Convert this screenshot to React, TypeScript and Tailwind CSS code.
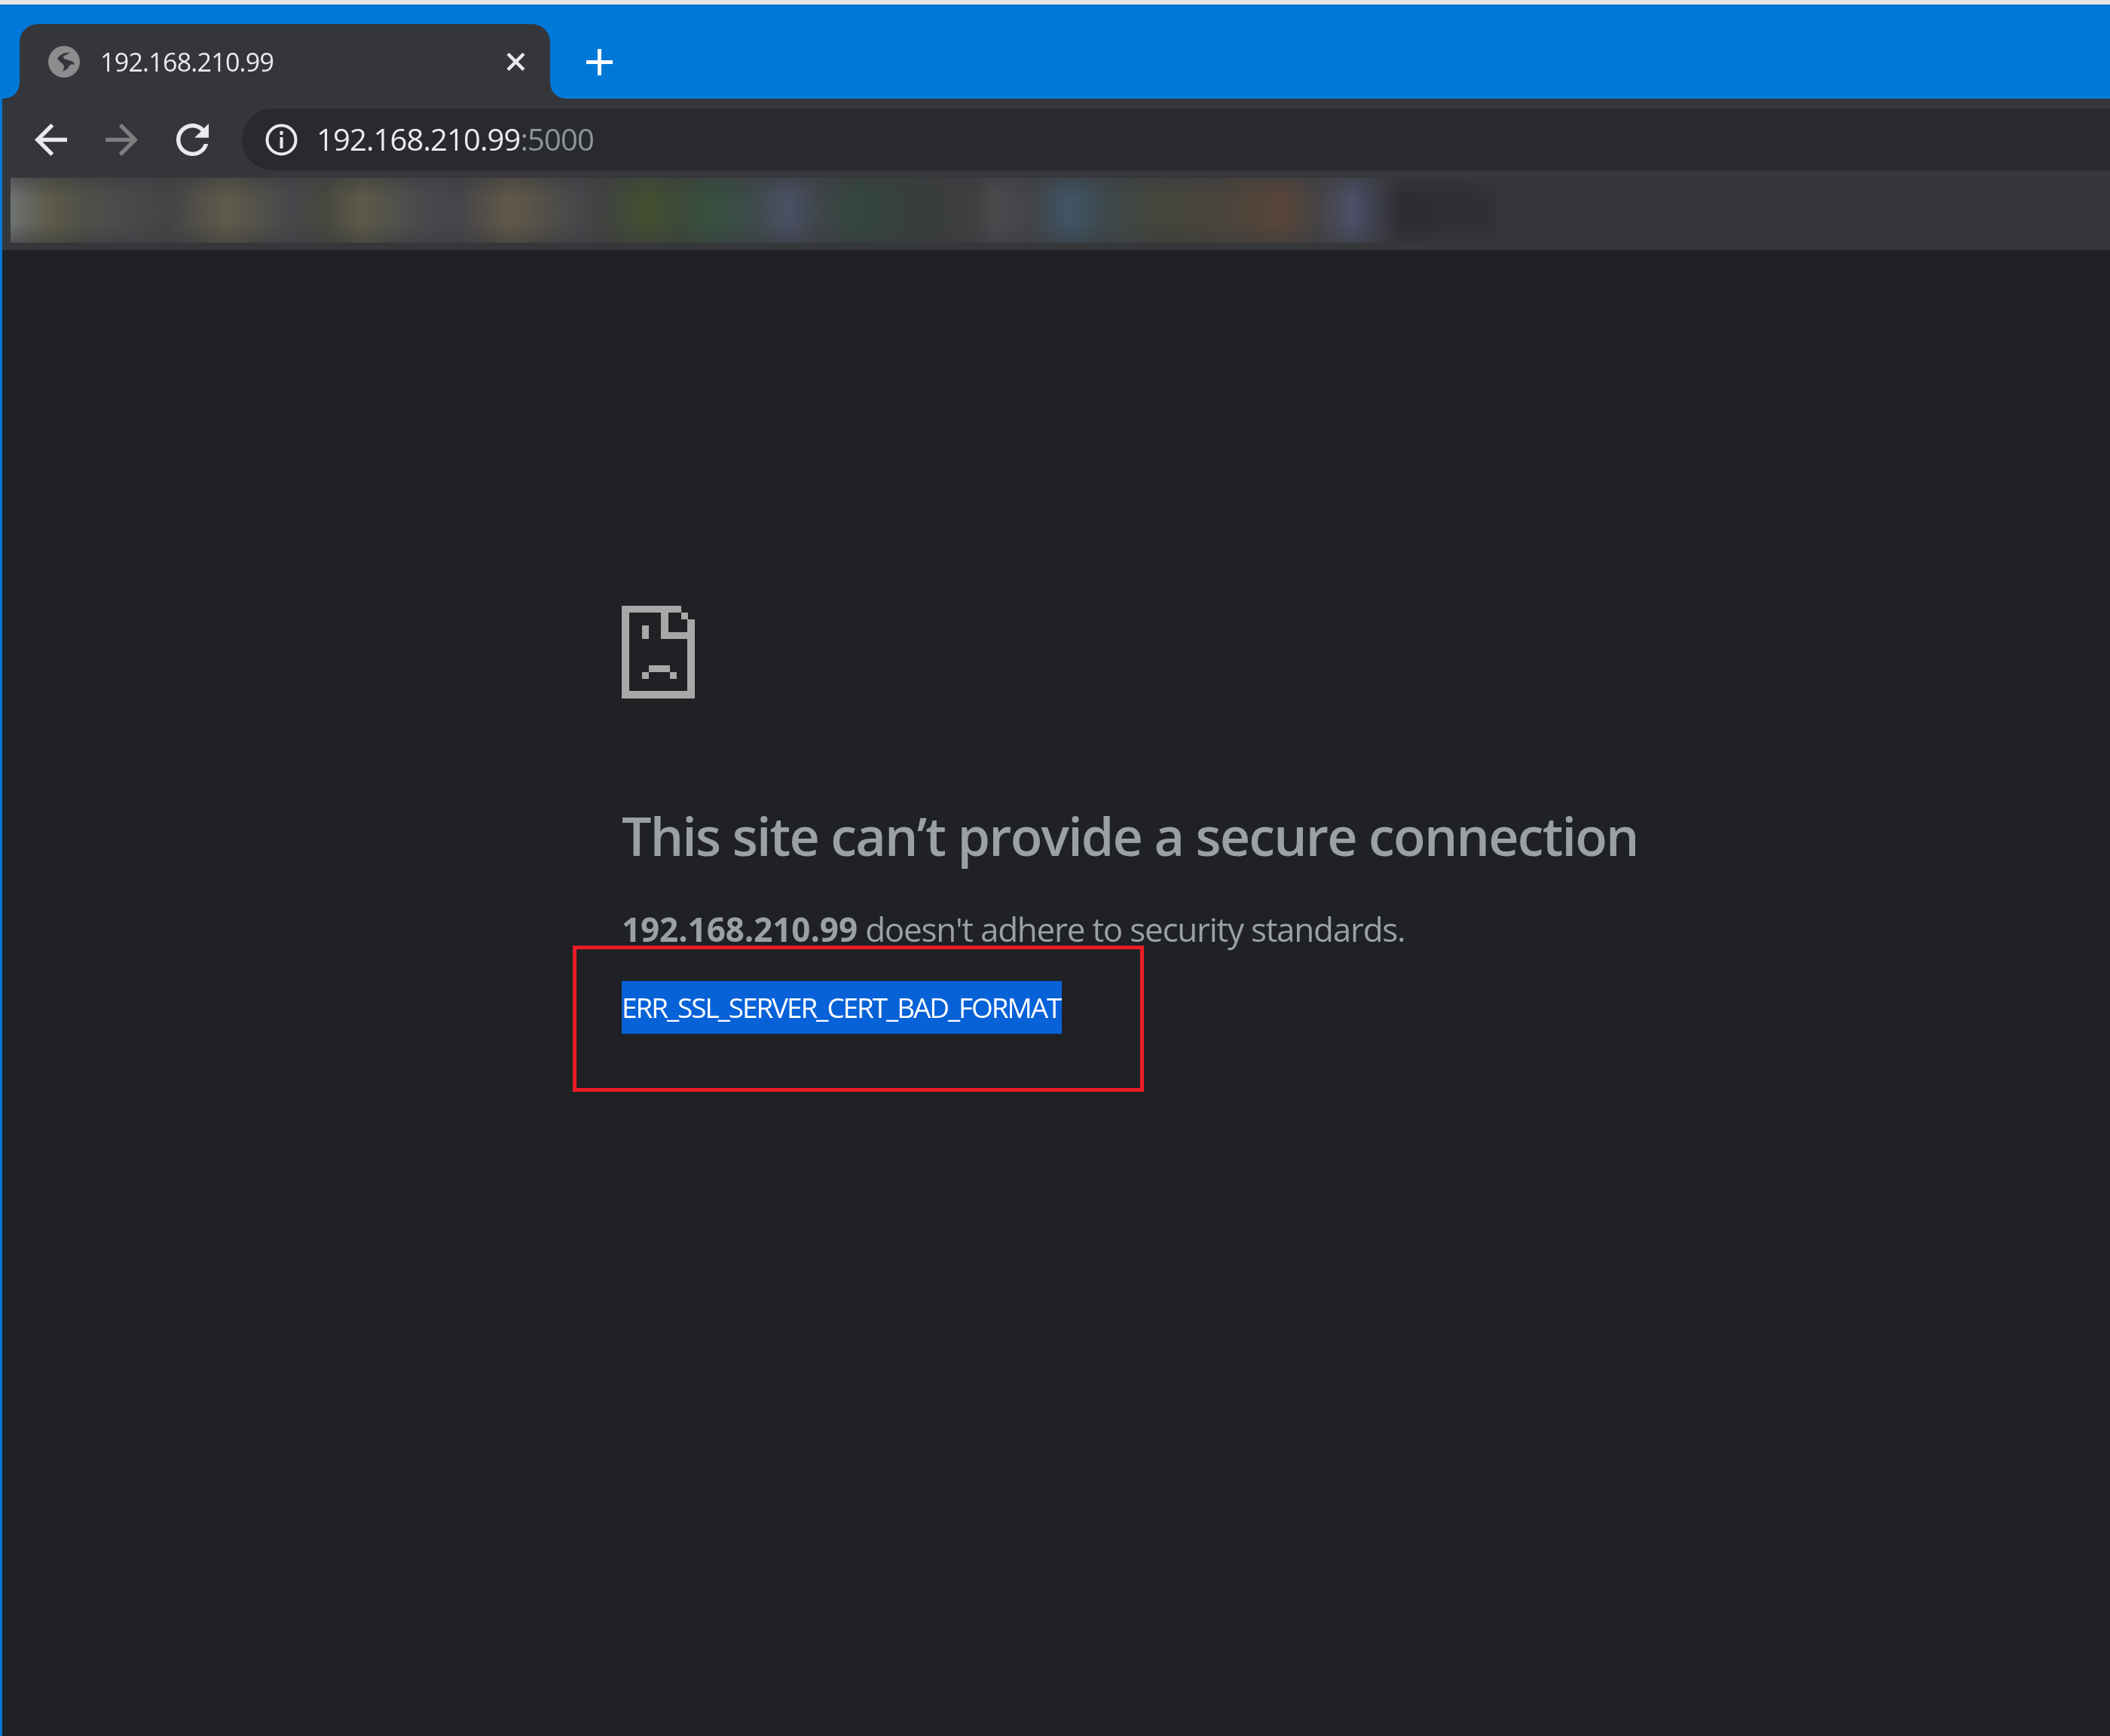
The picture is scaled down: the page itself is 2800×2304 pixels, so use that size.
const BASE_FONT = 'font-["Open_Sans","Noto_Sans",sans-serif]'

function BackIcon({ className }: { className: string }) {
  return (
    <svg viewBox="4 4 16 16" className={className} fill="currentColor">
      <path d="M20 11H7.83l5.59-5.59L12 4l-8 8 8 8 1.41-1.41L7.83 13H20v-2z" />
    </svg>
  )
}

function ForwardIcon({ className }: { className: string }) {
  return (
    <svg viewBox="4 4 16 16" className={className} fill="currentColor">
      <path d="M12 4l-1.41 1.41L16.17 11H4v2h12.17l-5.58 5.59L12 20l8-8z" />
    </svg>
  )
}

function ReloadIcon({ className }: { className: string }) {
  return (
    <svg viewBox="4 4 16 16" className={className} fill="currentColor">
      <path d="M17.65 6.35C16.2 4.9 14.21 4 12 4c-4.42 0-7.99 3.58-7.99 8s3.57 8 7.99 8c3.73 0 6.84-2.55 7.73-6h-2.08c-.82 2.33-3.04 4-5.65 4-3.31 0-6-2.69-6-6s2.69-6 6-6c1.66 0 3.14.69 4.22 1.78L13 11h7V4l-2.35 2.35z" />
    </svg>
  )
}

function InfoIcon({ className }: { className: string }) {
  return (
    <svg viewBox="0 0 43 43" className={className} fill="none">
      <circle cx="21.5" cy="21.5" r="19" stroke="currentColor" strokeWidth="4" />
      <rect x="19.5" y="10" width="4" height="5" fill="currentColor" />
      <rect x="19.5" y="18" width="4" height="15" fill="currentColor" />
    </svg>
  )
}

function GlobeIcon({ className }: { className: string }) {
  return (
    <svg viewBox="0 0 42 42" className={className}>
      <circle cx="21" cy="21" r="21" fill="#8c8c8e" />
      <path
        d="M12 17c4-6 10-9 17-8-3 2-7 3-9 5-1 2 3 4 7 5 5 1 8 3 8 6-3-1-5-1-7 1-1 3-4 6-9 8 2-4 3-8 0-10-3-3-5-5-7-7z"
        fill="#35363a"
      />
    </svg>
  )
}

function CloseIcon({ className }: { className: string }) {
  return (
    <svg viewBox="0 0 25 24" className={className} stroke="currentColor" strokeWidth="4.5" fill="none">
      <path d="M2 1.5l21 21M23 1.5l-21 21" />
    </svg>
  )
}

function PlusIcon({ className }: { className: string }) {
  return (
    <svg viewBox="0 0 35 35" className={className} fill="currentColor">
      <rect x="15" y="0" width="5" height="35" />
      <rect x="0" y="15" width="35" height="5" />
    </svg>
  )
}

function SadPageIcon({ className }: { className: string }) {
  return (
    <svg viewBox="132 100 296 375" className={className} fill="currentColor" shapeRendering="crispEdges">
      <rect x="132" y="100" width="30" height="375" />
      <rect x="132" y="100" width="240" height="28" />
      <rect x="132" y="445" width="296" height="30" />
      <rect x="398" y="155" width="30" height="320" />
      <rect x="292" y="100" width="28" height="135" />
      <rect x="292" y="207" width="120" height="28" />
      <rect x="372" y="128" width="28" height="27" />
      <rect x="214" y="180" width="28" height="55" />
      <rect x="242" y="340" width="86" height="27" />
      <rect x="214" y="367" width="28" height="28" />
      <rect x="328" y="367" width="28" height="28" />
    </svg>
  )
}

export default function App() {
  return (
    <div className={`flex h-screen w-full flex-col overflow-hidden bg-[#202124] blur-[0.6px] ${BASE_FONT}`}>
      <div className="h-[6px] shrink-0 bg-[#e6e6e6]" />
      <div className="flex-1 border-l-[3px] border-[#0078d7]">
        {/* tab strip */}
        <div className="flex h-[125px] items-end bg-[#0078d7] pl-[23px]">
          <div className="relative flex h-[99px] w-[704px] items-center rounded-t-[24px] bg-[#35363a] pl-[38px] pr-[33px]">
            <span className="absolute bottom-0 right-full h-[20px] w-[20px] bg-[radial-gradient(circle_at_0_0,transparent_19px,#35363a_20px)]" />
            <span className="absolute bottom-0 left-full h-[20px] w-[20px] bg-[radial-gradient(circle_at_100%_0,transparent_19px,#35363a_20px)]" />
            <GlobeIcon className="h-[42px] w-[42px]" />
            <span className="ml-[27px] text-[34px] leading-none tracking-[-0.75px] text-[#e8eaed]">192.168.210.99</span>
            <CloseIcon className="ml-auto h-[24px] w-[25px] text-[#e8eaed]" />
          </div>
          <PlusIcon className="mb-[31px] ml-[48px] h-[35px] w-[35px] text-white" />
        </div>

        {/* toolbar */}
        <div className="flex items-end bg-[#35363a] pl-[43px] pt-[13px]">
          <div className="mr-[44px] flex h-[82px] items-center gap-[51px]">
            <BackIcon className="h-[43px] w-[43px] text-[#e8eaed]" />
            <ForwardIcon className="h-[43px] w-[43px] text-[#7d7e80]" />
            <ReloadIcon className="h-[43px] w-[43px] text-[#e8eaed]" />
          </div>
          <div className="flex h-[82px] flex-1 items-center rounded-l-full bg-[#292a2d] pl-[31px]">
            <InfoIcon className="h-[43px] w-[43px] text-[#e8eaed]" />
            <span className="ml-[25px] text-[40px] leading-none tracking-[-0.9px] text-[#e8eaed]">
              192.168.210.99<span className="text-[#8f9499]">:5000</span>
            </span>
          </div>
        </div>

        {/* bookmarks, blurred out in the screenshot */}
        <div className="flex h-[106px] items-center bg-[#36373b] pl-[11px]">
          <div className="h-[86px] w-[1972px] bg-[linear-gradient(180deg,#3a3b3e88_0%,transparent_30%,transparent_70%,#3a3b3e88_100%),linear-gradient(90deg,#6f7373_0%,#666660_1.1%,#5c5a48_2.8%,#4f4f49_5%,#4a4a4d_7.9%,#444446_10.7%,#5f5a4a_14.5%,#47484b_18.8%,#47473f_21.1%,#5d5a48_23.6%,#4a4b4d_27.2%,#45454a_30.2%,#615848_33.6%,#47484b_38.1%,#414341_39.8%,#434f30_42.9%,#3d4a38_44.9%,#365040_47.2%,#3d4a4a_50%,#4a5064_52.3%,#3e4448_54.6%,#33463d_57%,#393c3d_62%,#3e3f41_64.7%,#4b4b4e_66.2%,#424448_68.7%,#3f5566_71.3%,#3e484c_73.8%,#44463c_77.1%,#4a443c_81.4%,#594539_85.6%,#454345_88%,#4c5068_90.3%,#3a3b45_92.3%,#2c2d31_93.6%,#303134_100%)]" />
        </div>

        {/* error page */}
        <main className="pl-[822px] pt-[471px]">
          <SadPageIcon className="h-[125px] w-[97px] text-[#a8a8a8]" />
          <h1 className="mt-[133px] text-[70px] font-semibold leading-[96px] tracking-[-1.83px] text-[#9aa0a6]">
            This site can’t provide a secure connection
          </h1>
          <p className="mt-[46px] text-[44px] leading-[60px] tracking-[-1.25px] text-[#9aa0a6]">
            <strong className="font-bold tracking-[-0.1px]">192.168.210.99</strong> doesn't adhere to security standards.
          </p>
          <div className="relative mt-[39px] w-[584px]">
            <div className="flex h-[70px] items-center whitespace-nowrap bg-[#0762d8] text-[37px] tracking-[-2.1px] text-white">
              ERR_SSL_SERVER_CERT_BAD_FORMAT
            </div>
            <div className="absolute left-[-65px] top-[-47px] h-[194px] w-[758px] border-[5px] border-[#ed1c24]" />
          </div>
        </main>
      </div>
    </div>
  )
}
